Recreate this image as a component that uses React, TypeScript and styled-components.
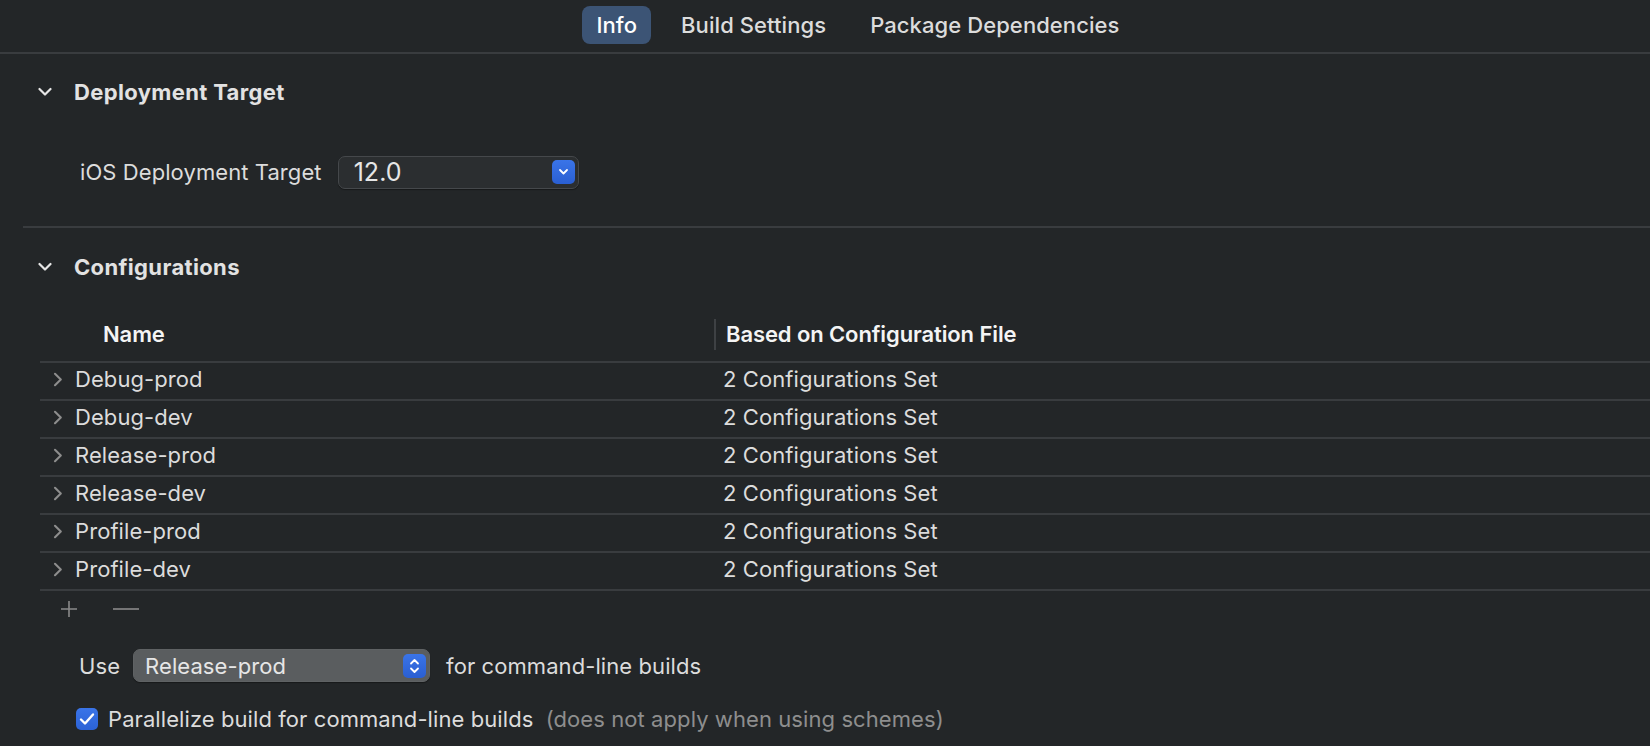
import React from "react";
import styled, { createGlobalStyle } from "styled-components";

const Global = createGlobalStyle`
  html, body { margin: 0; padding: 0; background: #232628; }
  body {
    font-family: Inter, "Liberation Sans", sans-serif;
    color: #dedede;
    -webkit-font-smoothing: antialiased;
  }
  * { box-sizing: border-box; }
`;

const Page = styled.div`
  width: 1650px;
  height: 746px;
  overflow: hidden;
  background: #232628;
  font-size: 22px;
  letter-spacing: 0.08px;
`;

const TopBar = styled.div`
  height: 54px;
  display: flex;
  align-items: center;
  justify-content: center;
  gap: 16px;
  padding-left: 66px;
  padding-bottom: 2px;
  border-bottom: 2px solid #393c3f;
`;

const Tab = styled.div<{ $active?: boolean }>`
  height: 38px;
  padding: 0 14px;
  display: flex;
  align-items: center;
  border-radius: 8px;
  font-size: 22px;
  font-weight: 500;
  color: ${(p) => (p.$active ? "#ffffff" : "#dcdcdc")};
  background: ${(p) => (p.$active ? "#3c5475" : "transparent")};
`;

const SectionHeader = styled.div<{ $mt: number }>`
  height: 40px;
  margin-top: ${(p) => p.$mt}px;
  padding-left: 38px;
  display: flex;
  align-items: center;
  gap: 22px;
  font-size: 22px;
  font-weight: 700;
  letter-spacing: 0.35px;
  color: #e2e2e2;
`;

const FieldRow = styled.div`
  margin-top: 44px;
  height: 32px;
  padding-left: 80px;
  display: flex;
  align-items: center;
  gap: 16px;
  color: #dcdcdc;
`;

const Popup = styled.div<{ $w: number; $grey?: boolean }>`
  width: ${(p) => p.$w}px;
  height: 33px;
  border-radius: 7px;
  display: flex;
  align-items: center;
  justify-content: space-between;
  padding: 0 3px 0 11px;
  background: ${(p) => (p.$grey ? "#5a5d5f" : "#2b2e30")};
  border: 1px solid ${(p) => (p.$grey ? "#5f6264" : "#45484b")};
  box-shadow: 0 1px 1px rgba(0, 0, 0, 0.35);
`;

const PopupText = styled.span<{ $big?: boolean }>`
  font-size: ${(p) => (p.$big ? "25px" : "22px")};
  color: #e6e6e6;
  padding-left: ${(p) => (p.$big ? "4px" : "0")};
`;

const BlueKnob = styled.div`
  width: 23px;
  height: 24px;
  border-radius: 5px;
  background: linear-gradient(#3a74e8, #2a5fd2);
  display: flex;
  align-items: center;
  justify-content: center;
`;

const Divider = styled.div`
  margin-top: 38px;
  margin-left: 23px;
  height: 2px;
  background: #393c3f;
`;

const Table = styled.div`
  margin-top: 30px;
  margin-left: 40px;
`;

const HeaderRow = styled.div`
  height: 46px;
  padding-bottom: 10px;
  display: grid;
  grid-template-columns: 674px 1fr;
  align-items: center;
  border-bottom: 2px solid #393c3f;
  font-weight: 600;
  letter-spacing: -0.1px;
  color: #f4f4f4;
`;

const HeaderCell = styled.div<{ $first?: boolean }>`
  display: flex;
  align-items: center;
  height: 31px;
  padding-left: ${(p) => (p.$first ? "63px" : "10px")};
  border-left: ${(p) => (p.$first ? "none" : "2px solid #3e4144")};
`;

const Row = styled.div`
  height: 38px;
  padding-bottom: 4px;
  display: grid;
  grid-template-columns: 674px 1fr;
  align-items: center;
  border-bottom: 2px solid #393c3f;
  color: #dcdcdc;
`;

const NameCell = styled.div`
  display: flex;
  align-items: center;
  gap: 12px;
  padding-left: 13px;
`;

const ValueCell = styled.div`
  padding-left: 9px;
`;

const AddRemove = styled.div`
  height: 36px;
  margin-left: 20px;
  display: flex;
  align-items: center;
  gap: 35px;
`;

const UseRow = styled.div`
  margin-top: 22px;
  height: 33px;
  padding-left: 79px;
  display: flex;
  align-items: center;
  gap: 13px;
  color: #dcdcdc;
`;

const UseTail = styled.span`
  margin-left: 3px;
`;

const CheckRow = styled.div`
  margin-top: 25px;
  height: 24px;
  padding-left: 76px;
  display: flex;
  align-items: center;
  gap: 10px;
  color: #dcdcdc;
`;

const CheckBox = styled.div`
  width: 22px;
  height: 22px;
  border-radius: 5px;
  background: linear-gradient(#3a74e8, #2b62d6);
  display: flex;
  align-items: center;
  justify-content: center;
`;

const Muted = styled.span`
  color: #8e8e8e;
  margin-left: 6px;
`;

const ChevronDown = () => (
  <svg width="14" height="10" viewBox="0 0 14 10">
    <path d="M1.5 2 L7 7.5 L12.5 2" fill="none" stroke="#e6e6e6" strokeWidth="2.2" strokeLinecap="round" strokeLinejoin="round" />
  </svg>
);

const ChevronRight = () => (
  <svg width="10" height="15" viewBox="0 0 10 15">
    <path d="M2 1.8 L7.8 7.5 L2 13.2" fill="none" stroke="#8d8d8d" strokeWidth="2.1" strokeLinecap="round" strokeLinejoin="round" />
  </svg>
);

const KnobDown = () => (
  <svg width="11" height="8" viewBox="0 0 11 8">
    <path d="M2 2 L5.5 5.5 L9 2" fill="none" stroke="#ffffff" strokeWidth="1.8" strokeLinecap="round" strokeLinejoin="round" />
  </svg>
);

const KnobUpDown = () => (
  <svg width="11" height="18" viewBox="0 0 11 18">
    <path d="M2 6.5 L5.5 3 L9 6.5 M2 11.5 L5.5 15 L9 11.5" fill="none" stroke="#ffffff" strokeWidth="1.8" strokeLinecap="round" strokeLinejoin="round" />
  </svg>
);

const Plus = () => (
  <svg width="18" height="18" viewBox="0 0 18 18">
    <path d="M9 1 V17 M1 9 H17" stroke="#8a8a8a" strokeWidth="1.6" />
  </svg>
);

const Minus = () => (
  <svg width="26" height="18" viewBox="0 0 26 18">
    <path d="M0 9 H26" stroke="#8a8a8a" strokeWidth="1.6" />
  </svg>
);

const Check = () => (
  <svg width="16" height="14" viewBox="0 0 16 14">
    <path d="M2 7.5 L6 11.5 L14 2.5" fill="none" stroke="#ffffff" strokeWidth="2.4" strokeLinecap="round" strokeLinejoin="round" />
  </svg>
);

const configs = ["Debug-prod", "Debug-dev", "Release-prod", "Release-dev", "Profile-prod", "Profile-dev"];

export default function App() {
  return (
    <Page>
      <Global />
      <TopBar>
        <Tab $active>Info</Tab>
        <Tab>Build Settings</Tab>
        <Tab>Package Dependencies</Tab>
      </TopBar>

      <SectionHeader $mt={18}>
        <ChevronDown />
        <span>Deployment Target</span>
      </SectionHeader>

      <FieldRow>
        <span>iOS Deployment Target</span>
        <Popup $w={241}>
          <PopupText $big>12.0</PopupText>
          <BlueKnob>
            <KnobDown />
          </BlueKnob>
        </Popup>
      </FieldRow>

      <Divider />

      <SectionHeader $mt={19}>
        <ChevronDown />
        <span>Configurations</span>
      </SectionHeader>

      <Table>
        <HeaderRow>
          <HeaderCell $first>Name</HeaderCell>
          <HeaderCell>Based on Configuration File</HeaderCell>
        </HeaderRow>
        {configs.map((c) => (
          <Row key={c}>
            <NameCell>
              <ChevronRight />
              <span>{c}</span>
            </NameCell>
            <ValueCell>2 Configurations Set</ValueCell>
          </Row>
        ))}
        <AddRemove>
          <Plus />
          <Minus />
        </AddRemove>
      </Table>

      <UseRow>
        <span>Use</span>
        <Popup $w={297} $grey>
          <PopupText>Release-prod</PopupText>
          <BlueKnob>
            <KnobUpDown />
          </BlueKnob>
        </Popup>
        <UseTail>for command-line builds</UseTail>
      </UseRow>

      <CheckRow>
        <CheckBox>
          <Check />
        </CheckBox>
        <span>
          Parallelize build for command-line builds <Muted>(does not apply when using schemes)</Muted>
        </span>
      </CheckRow>
    </Page>
  );
}
